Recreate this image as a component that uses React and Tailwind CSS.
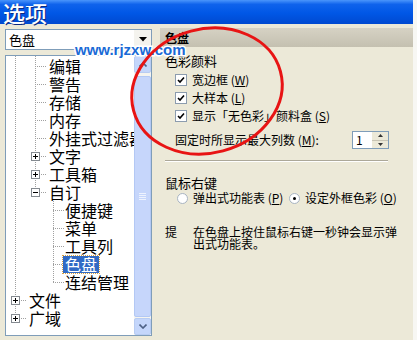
import React from 'react';

const rows = [
  { t: '编辑', lv: 2 },
  { t: '警告', lv: 2 },
  { t: '存储', lv: 2 },
  { t: '内存', lv: 2 },
  { t: '外挂式过滤器', lv: 2 },
  { t: '文字', lv: 2, box: '+' },
  { t: '工具箱', lv: 2, box: '+' },
  { t: '自订', lv: 2, box: '-' },
  { t: '便捷键', lv: 3 },
  { t: '菜单', lv: 3 },
  { t: '工具列', lv: 3 },
  { t: '色盘', lv: 3, sel: true },
  { t: '连结管理', lv: 3 },
  { t: '文件', lv: 1, box: '+' },
  { t: '广域', lv: 1, box: '+' },
];

// x of the vertical guide for each level, inside the tree
const guideX = { 1: 9, 2: 29, 3: 47 };
const ROW = 18;

function TreeLines() {
  const cy = (i) => 10 + ROW * i;
  return (
    <svg className="absolute left-0 top-0" width="128" height="279">
      <g stroke="#a0a0a0" strokeWidth="1" strokeDasharray="1 1" shapeRendering="crispEdges">
        <line x1="9.5" y1="0" x2="9.5" y2={cy(14)} />
        <line x1="29.5" y1="0" x2="29.5" y2={cy(7)} />
        <line x1="47.5" y1={cy(7) + 9} x2="47.5" y2={cy(12)} />
        {rows.map((r, i) => {
          const gx = guideX[r.lv];
          return <line key={i} x1={gx} y1={cy(i) + 0.5} x2={gx + 11} y2={cy(i) + 0.5} />;
        })}
      </g>
      {rows.map((r, i) =>
        r.box ? (
          <g key={'b' + i} shapeRendering="crispEdges">
            <rect x={guideX[r.lv] - 4 + 0.5} y={cy(i) - 4 + 0.5} width="8" height="8" fill="#fff" stroke="#848a90" />
            <line x1={guideX[r.lv] - 2} y1={cy(i) + 0.5} x2={guideX[r.lv] + 3} y2={cy(i) + 0.5} stroke="#000" />
            {r.box === '+' && (
              <line x1={guideX[r.lv] + 0.5} y1={cy(i) - 2} x2={guideX[r.lv] + 0.5} y2={cy(i) + 3} stroke="#000" />
            )}
          </g>
        ) : null
      )}
    </svg>
  );
}

function Check({ children }) {
  return (
    <div className="flex items-center h-[18px] pl-[15px]">
      <span className="w-[12px] h-[12px] border border-[#8c9cae] bg-white flex items-center justify-center">
        <svg width="8" height="8" viewBox="0 0 8 8">
          <path d="M1 4 L3 6 L7 1.5" fill="none" stroke="#000" strokeWidth="1.6" />
        </svg>
      </span>
      <span className="ml-[5px]">{children}</span>
    </div>
  );
}

function Radio({ on }) {
  return (
    <span className="w-[11px] h-[11px] rounded-full border border-[#a8b4c2] bg-white flex items-center justify-center">
      {on && <span className="w-[3px] h-[3px] rounded-full bg-black" />}
    </span>
  );
}

export default function App() {
  return (
    <div className="w-[417px] h-[340px] relative overflow-hidden flex bg-[#ece9d8] text-black font-['Noto_Sans_CJK_SC',sans-serif]">
      <div className="w-[413px] flex flex-col">
        {/* title bar */}
        <div className="h-[24px] flex items-center pl-[3px] bg-[linear-gradient(to_bottom,#4a95fb_0%,#0f63ec_18%,#0057e6_55%,#0049d0_100%)]">
          <span className="text-white text-[22px] leading-[24px] font-medium [text-shadow:1px_1px_0_#0a2a80]">选项</span>
        </div>

        <div className="flex pt-[4px]">
          {/* left column */}
          <div className="w-[152px] pl-[5px]">
            <div className="mt-[1px] h-[21px] border border-[#7f9db9] bg-white flex items-center">
              <span className="pl-[3px] text-[13px] flex-1 leading-none">色盘</span>
              <span className="w-[17px] h-[19px] bg-[#f4f3ee] flex items-center justify-center">
                <svg width="8" height="5" viewBox="0 0 8 5"><path d="M0 0 H8 L4 4.5 Z" fill="#000" /></svg>
              </span>
            </div>

            <div className="mt-[5px] h-[281px] border border-[#7f9db9] bg-white flex">
              <div className="relative flex-1 overflow-hidden pt-[1px]">
                <TreeLines />
                {rows.map((r, i) => (
                  <div
                    key={i}
                    className={
                      'relative h-[18px] flex items-center whitespace-nowrap text-[16px] leading-[18px] ' +
                      (r.lv === 1 ? 'pl-[21px]' : r.lv === 2 ? 'pl-[41px]' : 'pl-[57px]')
                    }
                  >
                    {r.sel ? (
                      <span className="bg-[#316ac5] text-white px-[2px] leading-[17px] outline outline-1 outline-dotted outline-[#d8a040]">{r.t}</span>
                    ) : (
                      <span className="px-[2px]">{r.t}</span>
                    )}
                  </div>
                ))}
              </div>
              {/* scrollbar */}
              <div className="w-[17px] flex flex-col bg-[#f5f4ef]">
                <div className="h-[17px] border border-[#b8ccf2] bg-[#c4d6fb] rounded-[2px] flex items-center justify-center">
                  <svg width="8" height="5" viewBox="0 0 8 5"><path d="M0.5 4.5 L4 1 L7.5 4.5" fill="none" stroke="#4d6185" strokeWidth="1.6" /></svg>
                </div>
                <div className="flex-1 mt-[3px] border border-[#b3c8f4] bg-[#c6d6fb] rounded-[2px] flex items-center justify-center">
                  <div className="flex flex-col gap-[1px]">
                    <span className="w-[7px] h-[1px] bg-[#eef3fe]" />
                    <span className="w-[7px] h-[1px] bg-[#eef3fe]" />
                    <span className="w-[7px] h-[1px] bg-[#eef3fe]" />
                    <span className="w-[7px] h-[1px] bg-[#eef3fe]" />
                  </div>
                </div>
                <div className="h-[17px] mt-[1px] border border-[#b8ccf2] bg-[#c4d6fb] rounded-[2px] flex items-center justify-center">
                  <svg width="8" height="5" viewBox="0 0 8 5"><path d="M0.5 0.5 L4 4 L7.5 0.5" fill="none" stroke="#4d6185" strokeWidth="1.6" /></svg>
                </div>
              </div>
            </div>
          </div>

          {/* right column */}
          <div className="ml-[8px] flex-1 text-[12px] leading-none">
            <div className="h-[19px] flex items-center pl-[5px] font-bold bg-[linear-gradient(to_bottom,#d6d2c4,#c4c0b0)]">色盘</div>
            <div className="mt-[5px] h-[16px] flex items-center pl-[5px] text-[13px]">色彩颜料</div>
            <div className="mt-[3px]">
              <Check>宽边框 (<u>W</u>)</Check>
              <Check>大样本 (<u>L</u>)</Check>
              <Check>显示「无色彩」颜料盒 (<u>S</u>)</Check>
            </div>
            <div className="mt-[6px] h-[18px] flex items-center pl-[15px]">
              <span className="w-[177px]">固定时所显示最大列数 (<u>M</u>):</span>
              <div className="flex h-[18px] border border-[#7f9db9] bg-white">
                <span className="w-[19px] flex items-center pl-[3px]">1</span>
                <div className="w-[16px] flex flex-col bg-[#ece9d8]">
                  <span className="flex-1 flex items-center justify-center border-b border-[#c8c4b4]">
                    <svg width="5" height="3" viewBox="0 0 5 3"><path d="M0 3 L2.5 0 L5 3 Z" fill="#333" /></svg>
                  </span>
                  <span className="flex-1 flex items-center justify-center">
                    <svg width="5" height="3" viewBox="0 0 5 3"><path d="M0 0 L2.5 3 L5 0 Z" fill="#333" /></svg>
                  </span>
                </div>
              </div>
            </div>
            <div className="mt-[11px] ml-[5px] w-[223px] border-t border-[#aca899] border-b border-b-white" />
            <div className="mt-[12px] h-[16px] flex items-center pl-[5px] text-[13px]">鼠标右键</div>
            <div className="h-[16px] flex items-center pl-[17px]">
              <Radio />
              <span className="ml-[5px] w-[96px]">弹出式功能表 (<u>P</u>)</span>
              <Radio on />
              <span className="ml-[5px]">设定外框色彩 (<u>O</u>)</span>
            </div>
            <div className="mt-[20px] flex pl-[5px] leading-[12px]">
              <span className="w-[28px]">提</span>
              <span>在色盘上按住鼠标右键一秒钟会显示弹<br />出式功能表。</span>
            </div>
          </div>
        </div>
      </div>
      <div className="w-[4px] bg-[#f7f7f3]" />

      {/* watermark */}
      <div className="absolute left-[75px] top-[42px] text-[15px] font-bold leading-none text-[#1a6ad6] font-['Liberation_Sans',sans-serif] [-webkit-text-stroke:3px_#ffffff] [paint-order:stroke_fill]">
        www.rjzxw.com
      </div>

      {/* red annotation ellipse */}
      <svg className="absolute left-0 top-0 pointer-events-none" width="417" height="340">
        <ellipse cx="207" cy="91" rx="76" ry="62" transform="rotate(-15 207 91)" fill="none" stroke="#e81414" strokeWidth="3" />
      </svg>
    </div>
  );
}
